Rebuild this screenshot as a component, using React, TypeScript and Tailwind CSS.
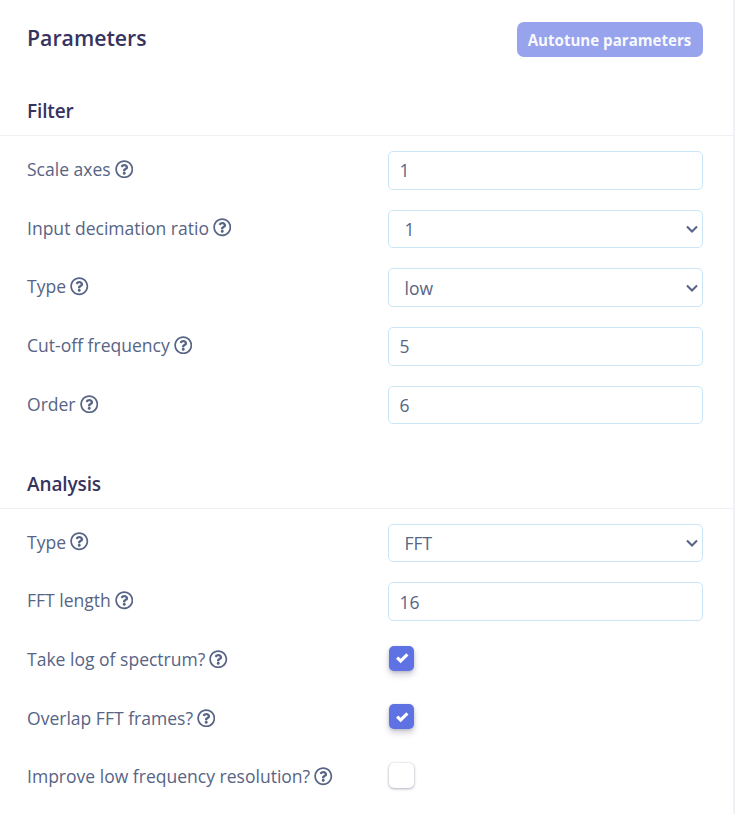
import { ReactNode } from "react";
import { FaRegQuestionCircle } from "react-icons/fa";

const controlClass =
  "flex h-[38.7px] w-[315px] items-center rounded-[5px] border border-[#cae6f6] bg-white text-[17.5px] leading-6";

function TextField({ value }: { value: string }) {
  return (
    <div className={`${controlClass} px-[10.5px]`}>
      <span>{value}</span>
    </div>
  );
}

function SelectField({ value }: { value: string }) {
  return (
    <div className={`${controlClass} justify-between pl-[15.5px] pr-[3px]`}>
      <span>{value}</span>
      <svg className="h-3 w-3.5" viewBox="0 0 14 12" fill="none" stroke="currentColor" strokeWidth="2.1">
        <path d="M2 3.6 7 8.6l5-5" />
      </svg>
    </div>
  );
}

function Check({ checked }: { checked: boolean }) {
  if (!checked) {
    return (
      <div className="mb-1 ml-px h-[25px] w-[25px] rounded-[5px] bg-white shadow-[0_1px_3px_rgba(50,50,93,0.35),0_0_2px_rgba(50,50,93,0.15)]" />
    );
  }
  return (
    <div className="mb-[4.4px] ml-px flex h-[25px] w-[25px] items-center justify-center rounded-[5px] bg-[#5e72e4] shadow-[0_4px_6px_rgba(50,50,93,0.22),0_1px_3px_rgba(50,50,93,0.2)]">
      <svg className="ml-0.5 mt-px h-[12.5px] w-[12.5px]" viewBox="0 0 8 8" fill="#fff">
        <path d="M6.564.75l-3.59 3.612-1.538-1.55L0 4.26 2.974 7.25 8 2.193z" />
      </svg>
    </div>
  );
}

function Row({ label, children }: { label: string; children: ReactNode }) {
  return (
    <div className="flex h-[58.7px] items-center pl-[27px]">
      <div className="flex w-[361px] items-center gap-1 pb-[2.4px] text-[17.55px] leading-6">
        <span className="whitespace-nowrap">{label}</span>
        <FaRegQuestionCircle className="h-[18.5px] w-[18.5px]" />
      </div>
      {children}
    </div>
  );
}

function SectionTitle({ children }: { children: ReactNode }) {
  return (
    <h2 className="flex h-[50px] items-center border-b border-[#eff0f2] pl-[27px] pt-0.5 text-[19px] font-semibold tracking-[-0.12px] text-[#36335f]">
      {children}
    </h2>
  );
}

export default function App() {
  return (
    <main className="h-[814px] w-[735px] overflow-hidden border-r-2 border-[#f0f0f6] bg-white font-['Open_Sans','Noto_Sans',sans-serif] text-[#576485]">
      <header className="flex h-[86px] items-start justify-between pl-[27px] pr-[30px] pt-[22px]">
        <h1 className="text-[21.25px] font-semibold leading-8 text-[#36335f]">Parameters</h1>
        <button className="h-[35px] w-[186px] whitespace-nowrap rounded-[7px] bg-[#97a3ed] pr-px pt-px text-[15.1px] font-bold text-white/95">
          Autotune parameters
        </button>
      </header>

      <section className="h-[373px]">
        <SectionTitle>Filter</SectionTitle>
        <div className="pt-[4.9px]">
          <Row label="Scale axes"><TextField value="1" /></Row>
          <Row label="Input decimation ratio"><SelectField value="1" /></Row>
          <Row label="Type"><SelectField value="low" /></Row>
          <Row label="Cut-off frequency"><TextField value="5" /></Row>
          <Row label="Order"><TextField value="6" /></Row>
        </div>
      </section>

      <section>
        <SectionTitle>Analysis</SectionTitle>
        <div className="pt-[4.6px]">
          <Row label="Type"><SelectField value="FFT" /></Row>
          <Row label="FFT length"><TextField value="16" /></Row>
          <Row label="Take log of spectrum?"><Check checked /></Row>
          <Row label="Overlap FFT frames?"><Check checked /></Row>
          <Row label="Improve low frequency resolution?"><Check checked={false} /></Row>
        </div>
      </section>
    </main>
  );
}
